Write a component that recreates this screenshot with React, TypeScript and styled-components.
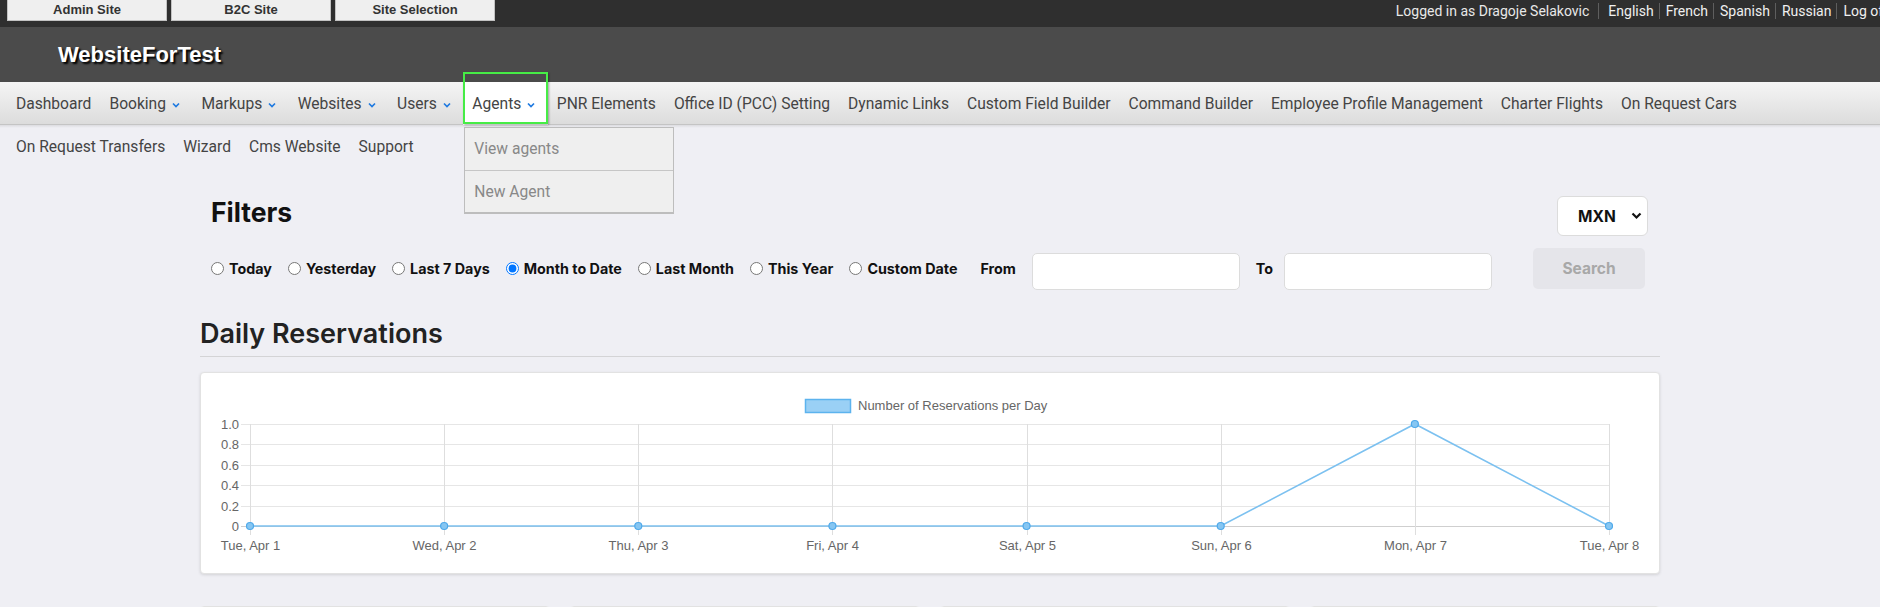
import styled, { createGlobalStyle } from 'styled-components'

const GlobalStyle = createGlobalStyle`
  html, body {
    margin: 0;
    padding: 0;
    overflow: hidden;
  }
  body {
    background: #efeff4;
    font-family: Roboto, "Liberation Sans", Arial, sans-serif;
  }
  * {
    box-sizing: border-box;
  }
`

const texts = {
  brand: 'WebsiteForTest',
  sites: ['Admin Site', 'B2C Site', 'Site Selection'],
  user: 'Logged in as Dragoje Selakovic',
  langs: ['English', 'French', 'Spanish', 'Russian', 'Log off'],
  filters: 'Filters',
  daily: 'Daily Reservations',
  legend: 'Number of Reservations per Day'
}

const menu = [
  { label: 'Dashboard' },
  { label: 'Booking', drop: true },
  { label: 'Markups', drop: true },
  { label: 'Websites', drop: true },
  { label: 'Users', drop: true },
  { label: 'Agents', drop: true, active: true },
  { label: 'PNR Elements' },
  { label: 'Office ID (PCC) Setting' },
  { label: 'Dynamic Links' },
  { label: 'Custom Field Builder' },
  { label: 'Command Builder' },
  { label: 'Employee Profile Management' },
  { label: 'Charter Flights' },
  { label: 'On Request Cars' },
  { label: 'On Request Transfers' },
  { label: 'Wizard' },
  { label: 'Cms Website' },
  { label: 'Support' }
]

const ranges = [
  'Today',
  'Yesterday',
  'Last 7 Days',
  'Month to Date',
  'Last Month',
  'This Year',
  'Custom Date'
]

const days = [
  'Tue, Apr 1',
  'Wed, Apr 2',
  'Thu, Apr 3',
  'Fri, Apr 4',
  'Sat, Apr 5',
  'Sun, Apr 6',
  'Mon, Apr 7',
  'Tue, Apr 8'
]
const counts = [0, 0, 0, 0, 0, 0, 1, 0]

const Chevron = () => (
  <svg width="8" height="6" viewBox="0 0 8 6">
    <polyline
      points="1,1.5 4,4.5 7,1.5"
      fill="none"
      stroke="#1f7ae0"
      strokeWidth="1.7"
    />
  </svg>
)

const ReservationsChart = () => {
  const x0 = 49
  const x1 = 1408
  const top = 51
  const zero = 153
  const step = (x1 - x0) / (days.length - 1)
  const yAt = (v: number) => zero - (zero - top) * v
  const ticks = [0, 0.2, 0.4, 0.6, 0.8, 1]
  const points = counts.map((v, i) => `${x0 + i * step},${yAt(v)}`).join(' ')

  return (
    <svg width="100%" height="200" viewBox="0 0 1458 200">
      <rect x="604.5" y="26.5" width="45" height="13" fill="#9ad0f5" stroke="#5cb3ee" strokeWidth="1.5" />
      <text x="657" y="37" fontSize="13" fill="#666" fontFamily="Liberation Sans, Arial, sans-serif">
        {texts.legend}
      </text>
      {ticks.map((t) => {
        const y = Math.round(yAt(t)) + 0.5
        return (
          <g key={t}>
            <line x1="40" x2={x1} y1={y} y2={y} stroke={t === 0 ? '#cfcfcf' : '#e6e6e6'} />
            <text
              x="38"
              y={y + 4.5}
              fontSize="13"
              textAnchor="end"
              fill="#666"
              fontFamily="Liberation Sans, Arial, sans-serif">
              {t === 0 ? '0' : t.toFixed(1)}
            </text>
          </g>
        )
      })}
      {days.map((d, i) => {
        const x = Math.round(x0 + i * step) + 0.5
        return (
          <g key={d}>
            <line x1={x} x2={x} y1={top} y2={162} stroke="#dedede" />
            <text
              x={x}
              y="177"
              fontSize="13"
              textAnchor="middle"
              fill="#666"
              fontFamily="Liberation Sans, Arial, sans-serif">
              {d}
            </text>
          </g>
        )
      })}
      <polyline points={points} fill="none" stroke="#7cc1f0" strokeWidth="1.6" />
      {counts.map((v, i) => (
        <circle
          key={i}
          cx={x0 + i * step}
          cy={yAt(v)}
          r="3.5"
          fill="#86c6f2"
          stroke="#4fa9ea"
          strokeWidth="1.2"
        />
      ))}
    </svg>
  )
}

export default function App() {
  return (
    <>
      <GlobalStyle />
      <TopBar>
        {texts.sites.map((s) => (
          <SiteButton key={s}>{s}</SiteButton>
        ))}
        <UserBar>
          <span>{texts.user}</span>
          <Sep $wide />
          {texts.langs.map((l, i) => (
            <LangItem key={l}>
              {i > 0 && <Sep />}
              <a>{l}</a>
            </LangItem>
          ))}
        </UserBar>
      </TopBar>

      <Header>
        <Brand>{texts.brand}</Brand>
      </Header>

      <NavBar>
        {menu.map((m) => (
          <NavItem key={m.label} $active={m.active}>
            {m.label}
            {m.drop && (
              <Caret>
                <Chevron />
              </Caret>
            )}
            {m.active && (
              <Dropdown>
                <DropItem>View agents</DropItem>
                <DropItem>New Agent</DropItem>
              </Dropdown>
            )}
          </NavItem>
        ))}
      </NavBar>

      <Main>
        <FilterPanel>
          <FilterHead>
            <Title>{texts.filters}</Title>
            <CurrencyBox>
              <CurrencySelect defaultValue="MXN">
                <option>MXN</option>
                <option>USD</option>
                <option>EUR</option>
              </CurrencySelect>
              <SelectArrow width="11" height="8" viewBox="0 0 11 8">
                <polyline points="1.5,1.5 5.5,5.5 9.5,1.5" fill="none" stroke="#111" strokeWidth="2.2" />
              </SelectArrow>
            </CurrencyBox>
          </FilterHead>

          <FilterRow>
            {ranges.map((r) => (
              <RangeOption key={r} $last={r === 'Custom Date'}>
                <input
                  type="radio"
                  name="range"
                  defaultChecked={r === 'Month to Date'}
                />
                {r}
              </RangeOption>
            ))}
            <FieldLabel $after={16}>From</FieldLabel>
            <DateInput type="text" />
            <FieldLabel $before={16} $after={11}>
              To
            </FieldLabel>
            <DateInput type="text" />
            <SearchButton disabled>Search</SearchButton>
          </FilterRow>
        </FilterPanel>

        <SectionTitle>{texts.daily}</SectionTitle>
        <ChartCard>
          <ReservationsChart />
        </ChartCard>

        <CardRow>
          <SmallCard />
          <SmallCard />
          <SmallCard />
          <SmallCard />
        </CardRow>
      </Main>
    </>
  )
}

const TopBar = styled.div`
  display: flex;
  align-items: flex-start;
  height: 27px;
  padding-left: 7px;
  background: #2f2f2f;
  overflow: hidden;
`

const SiteButton = styled.button`
  all: unset;
  box-sizing: border-box;
  width: 160px;
  height: 21px;
  margin-right: 4px;
  background: #efefef;
  border: 1px solid #c2c2c2;
  border-top: none;
  text-align: center;
  font: bold 13px/20px 'Liberation Sans', Arial, sans-serif;
  color: #333;
`

const UserBar = styled.div`
  display: flex;
  align-items: center;
  height: 21px;
  margin-left: auto;
  margin-right: -8px;
  font-size: 14px;
  color: #e8e8e8;
  white-space: nowrap;
`

const Sep = styled.span<{ $wide?: boolean }>`
  display: inline-block;
  width: 1px;
  height: 16px;
  background: #5e5e5e;
  margin: ${(p) => (p.$wide ? '0 9px' : '0 6px 0 5px')};
`

const LangItem = styled.span`
  display: flex;
  align-items: center;
  a {
    color: #f0f0f0;
    cursor: pointer;
  }
`

const Header = styled.header`
  height: 55px;
  padding-left: 58px;
  background: #4b4b4b;
`

const Brand = styled.div`
  font: bold 22px/55px 'Liberation Sans', Arial, sans-serif;
  color: #fff;
  text-shadow: 2px 2px 2px #000;
`

const NavBar = styled.nav`
  display: flex;
  flex-wrap: wrap;
  padding-left: 7px;
  background:
    linear-gradient(#f5f5f5, #dcdcdc) 0 0 / 100% 42px no-repeat,
    linear-gradient(#c4c4c4, #c4c4c4) 0 42px / 100% 1px no-repeat,
    linear-gradient(#dcdce0, #efeff4) 0 43px / 100% 3px no-repeat;
`

const NavItem = styled.div<{ $active?: boolean }>`
  position: relative;
  display: flex;
  align-items: center;
  height: 43px;
  padding: 0 9px;
  font-size: 15.6px;
  color: #444;
  white-space: nowrap;
  background: ${(p) => (p.$active ? '#fff' : 'transparent')};
  cursor: pointer;

  &::after {
    content: '';
    display: ${(p) => (p.$active ? 'block' : 'none')};
    position: absolute;
    top: -10px;
    left: 0;
    right: 0;
    bottom: 1px;
    border: 2px solid #46ec46;
    box-shadow: 1px 1px 2px rgba(0, 0, 0, 0.35);
    pointer-events: none;
  }
`

const Caret = styled.span`
  display: inline-flex;
  width: 11.5px;
  margin-left: 6px;
  padding-top: 2px;
`

const Dropdown = styled.div`
  position: absolute;
  top: 45px;
  left: 1px;
  width: 210px;
  z-index: 5;
  background: #efefef;
  border: 1px solid #bdbdbd;
  border-bottom-width: 2px;
`

const DropItem = styled.div`
  height: 42px;
  line-height: 42px;
  padding-left: 9px;
  font-size: 15.6px;
  color: #888;
  & + & {
    border-top: 1px solid #c6c6c6;
  }
`

const Main = styled.main`
  max-width: 1480px;
  margin: 0 auto;
  padding: 28px 20px 0 0;
  font-family: Inter, 'Liberation Sans', Arial, sans-serif;
  color: #111;
`

const FilterPanel = styled.section`
  padding: 0 12px 0 11px;
`

const FilterHead = styled.div`
  display: flex;
  justify-content: space-between;
  align-items: flex-start;
`

const Title = styled.h2`
  margin: -1px 0 0;
  font-size: 26.5px;
  line-height: 34px;
  font-weight: 700;
`

const CurrencyBox = styled.div`
  position: relative;
  width: 91px;
  height: 40px;
`

const CurrencySelect = styled.select`
  appearance: none;
  width: 100%;
  height: 100%;
  padding-left: 20px;
  background: #fff;
  border: 1px solid #dcdcdc;
  border-radius: 6px;
  font: 700 15.5px Inter, sans-serif;
  color: #111;
`

const SelectArrow = styled.svg`
  position: absolute;
  right: 6px;
  top: 16px;
  pointer-events: none;
`

const FilterRow = styled.div`
  display: flex;
  align-items: center;
  margin-top: 11px;
`

const RangeOption = styled.label<{ $last?: boolean }>`
  display: inline-flex;
  flex-shrink: 0;
  align-items: center;
  gap: 5px;
  margin-right: ${(p) => (p.$last ? 23 : 16)}px;
  font-size: 14.3px;
  font-weight: 700;
  white-space: nowrap;
  input {
    margin: 0;
    width: 13px;
    height: 13px;
  }
`

const FieldLabel = styled.span<{ $before?: number; $after?: number }>`
  flex-shrink: 0;
  margin: 0 ${(p) => p.$after ?? 0}px 0 ${(p) => p.$before ?? 0}px;
  font-size: 14.3px;
  font-weight: 700;
`

const DateInput = styled.input`
  flex-shrink: 0;
  width: 208px;
  height: 37px;
  margin-top: 6px;
  background: #fff;
  border: 1px solid #dcdcdc;
  border-radius: 5px;
`

const SearchButton = styled.button`
  flex-shrink: 0;
  width: 112px;
  height: 41px;
  margin-left: 41px;
  border: none;
  border-radius: 5px;
  background: #e5e5ea;
  color: #a8a8a8;
  font: 700 15.5px Inter, sans-serif;
`

const SectionTitle = styled.h2`
  margin: 27px 0 0;
  padding-bottom: 5px;
  border-bottom: 1px solid #d4d4d6;
  font-size: 27px;
  line-height: 34px;
  font-weight: 600;
  color: #222;
`

const ChartCard = styled.div`
  height: 202px;
  margin-top: 15px;
  background: #fff;
  border: 1px solid #e2e2e2;
  border-radius: 4px;
  box-shadow: 0 1px 3px rgba(0, 0, 0, 0.12);
  overflow: hidden;
`

const CardRow = styled.div`
  display: grid;
  grid-template-columns: repeat(4, 1fr);
  gap: 20px;
  margin-top: 32px;
`

const SmallCard = styled.div`
  height: 120px;
  background: #fff;
  border: 1px solid #e2e2e2;
  border-radius: 4px;
`
